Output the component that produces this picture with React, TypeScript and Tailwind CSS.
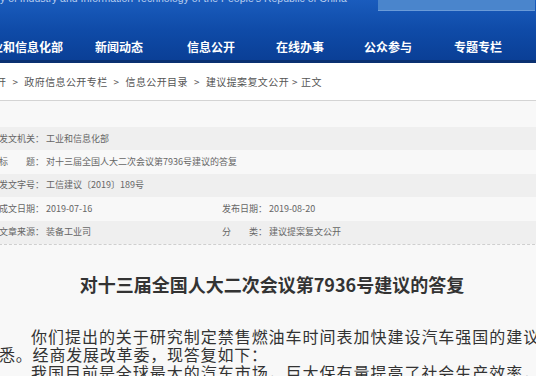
import React from "react";

const navItems = [
  { label: "新闻动态", ml: "ml-[32px]" },
  { label: "信息公开", ml: "ml-[44px]" },
  { label: "在线办事", ml: "ml-[41px]" },
  { label: "公众参与", ml: "ml-[40px]" },
  { label: "专题专栏", ml: "ml-[42px]" },
];

const crumbs = ["政府信息公开专栏", "信息公开目录", "建议提案复文公开"];

function InfoRow({ label, value, label2, value2, shade }: { label: string; value: string; label2?: string; value2?: string; shade: boolean }) {
  return (
    <div className={`flex h-[23.4px] items-center ${shade ? "bg-[#efefef]" : "bg-[#f8f8f8]"}`}>
      <div className="w-[223px] whitespace-nowrap">
        <span>{label}</span>
        <span className="ml-[2px]">{value}</span>
      </div>
      {label2 && (
        <div className="whitespace-nowrap">
          <span>{label2}</span>
          <span className="ml-[2px]">{value2}</span>
        </div>
      )}
    </div>
  );
}

export default function App() {
  return (
    <div className="h-[376px] w-[536px] overflow-hidden bg-[#f8f8f8] font-['Noto_Sans_CJK_SC','Noto_Sans',sans-serif]">
      <div className="ml-[-1px] w-[546px]">
        <header className="h-[63px] border-b-[3px] border-[#0b3171] bg-gradient-to-b from-[#1a5cbd] via-[#0f4ba8] to-[#0a3f96]">
          <div className="flex h-[11px] items-start justify-between overflow-hidden">
            <p className="mt-[-8px] whitespace-nowrap pl-[1px] font-['Liberation_Sans',sans-serif] text-[10.5px] leading-[12px] text-[#b9cff0]">
              y of Industry and Information Technology of the People's Republic of China
            </p>
            <div className="mr-[10px] h-[11px] w-[157px] border-b border-[#6a9bd8] bg-[#4a85cc]" />
          </div>
          <nav className="mt-[29px] flex items-center whitespace-nowrap text-[12px] font-bold leading-[14px] text-white">
            <span className="ml-[-20px]">工业和信息化部</span>
            {navItems.map((item) => (
              <span key={item.label} className={item.ml}>{item.label}</span>
            ))}
          </nav>
        </header>

        <div className="flex h-[38px] items-center border-b border-[#d4d4d4] bg-white text-[10px] tracking-[0.4px] text-[#555]">
          <span className="ml-[-3px]">开</span>
          {crumbs.map((c) => (
            <React.Fragment key={c}>
              <span className="mx-[6px]">&gt;</span>
              <span>{c}</span>
            </React.Fragment>
          ))}
          <span className="mx-[3px]">&gt;</span>
          <span>正文</span>
        </div>

        <div className="pt-[26px] text-[9px] leading-[12px] text-[#666]">
          <InfoRow shade label="发文机关：" value="工业和信息化部" />
          <InfoRow shade={false} label="标　　题：" value="对十三届全国人大二次会议第7936号建议的答复" />
          <InfoRow shade label="发文字号：" value="工信建议〔2019〕189号" />
          <InfoRow shade={false} label="成文日期：" value="2019-07-16" label2="发布日期：" value2="2019-08-20" />
          <InfoRow shade label="文章来源：" value="装备工业司" label2="分　　类：" value2="建议提案复文公开" />
          <div className="border-b border-dashed border-[#cfcfcf]" />
        </div>

        <h1 className="mt-[27px] text-center text-[18px] font-bold leading-[24px] text-[#333]">
          对十三届全国人大二次会议第7936号建议的答复
        </h1>

        <div className="mt-[31px] w-[558px] text-justify text-[16px] leading-[18px] tracking-[0.8px] text-[#333]">
          <p className="indent-[32px]">你们提出的关于研究制定禁售燃油车时间表加快建设汽车强国的建议收悉。经商发展改革委，现答复如下：</p>
          <p className="indent-[32px]">我国目前是全球最大的汽车市场，巨大保有量提高了社会生产效率，主要城市交通拥堵、环境污染等问题也日益突出。</p>
        </div>
      </div>
    </div>
  );
}
